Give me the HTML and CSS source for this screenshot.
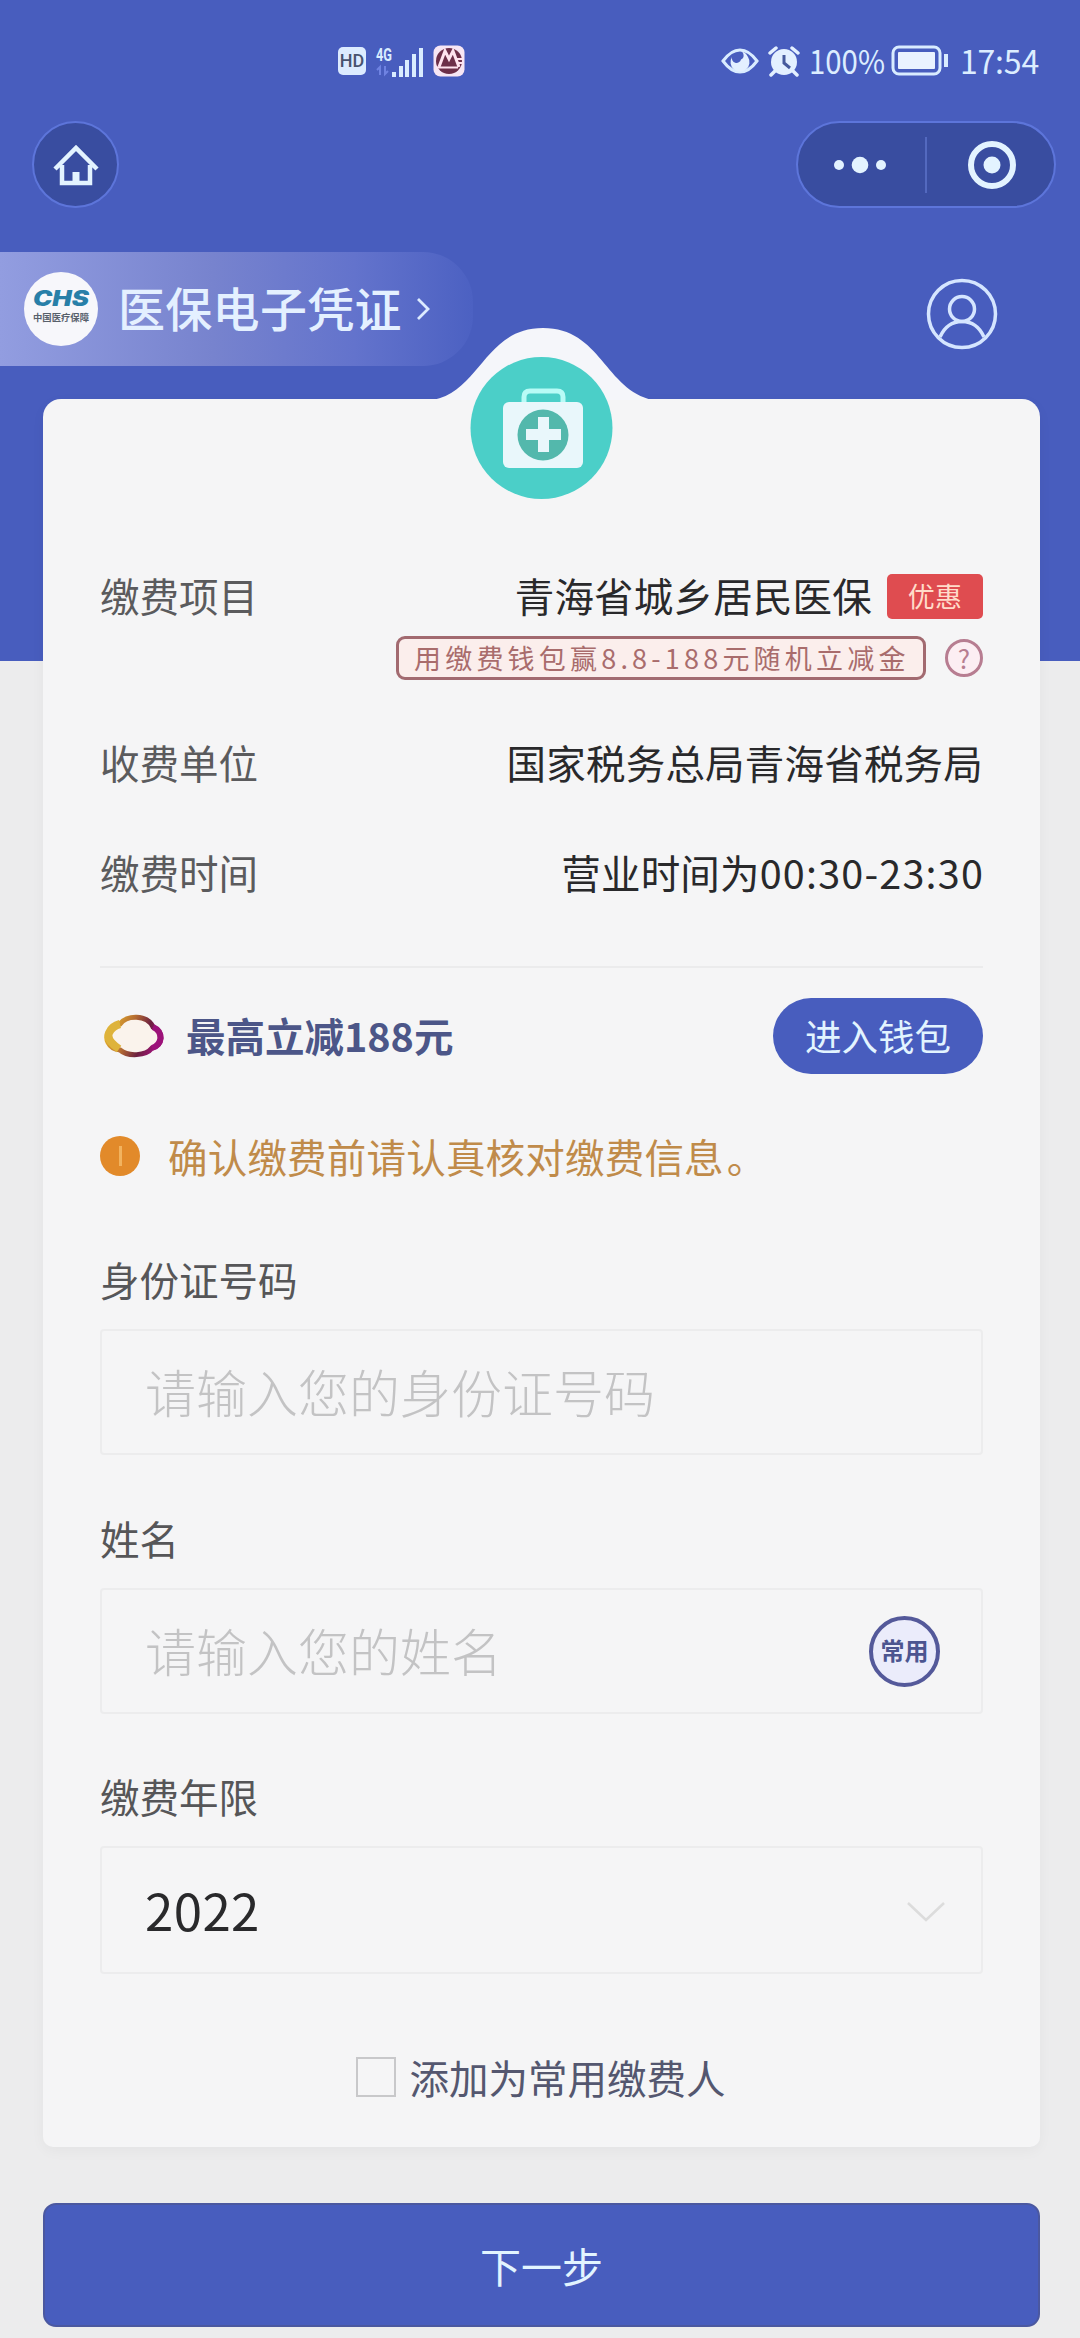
FILE: index.html
```
<!DOCTYPE html>
<html lang="zh-CN">
<head>
<meta charset="utf-8">
<title>医保缴费</title>
<link rel="stylesheet" href="styles.css">
</head>
<body>
<div class="page">
  <header class="status">
    <div class="status-left">
      <span class="hd">HD</span>
      <svg class="signal" width="50" height="34" viewBox="0 0 50 34">
        <text class="net" x="2" y="17" textLength="16" lengthAdjust="spacingAndGlyphs">4G</text>
        <path d="M6 31V23l-3 3M11 22v8l3-3" fill="none" stroke="#6f83e2" stroke-width="2"/>
        <path d="M18 28h4v5h-4zM25 22h4v11h-4zM31 16h4v17h-4zM38 10h4v23h-4zM45 4h4v29h-4z" fill="#d9ecff"/>
      </svg>
      <svg class="bank" width="32" height="32" viewBox="0 0 32 32">
        <rect x=".5" y=".5" width="31" height="31" rx="7" fill="#f7e6f4"/>
        <circle cx="16" cy="16" r="13" fill="#6d2f49"/>
        <path d="M6 22 12 6 16 14 20 6 26 22" fill="none" stroke="#ffe3ef" stroke-width="3"/>
        <path d="M4 22.500h21M23 14h7M24 18h6" stroke="#ffe3ef" stroke-width="2"/>
        <path d="M9 21 12 14 15 21zM17 21 20 14 23 21z" fill="#6d2f49"/>
      </svg>
    </div>
    <div class="status-right">
      <svg width="38" height="28" viewBox="0 0 38 28">
        <path d="M2 14Q10 3 19 3t17 11Q28 25 19 25T2 14z" fill="none" stroke="#d9ecff" stroke-width="3"/>
        <path d="M11 10a9.500 9.500 0 1 0 16 0A10 10 0 0 0 19 4a4.500 4.500 0 0 1 1 8.500A4.500 4.500 0 0 1 11 10z" fill="#e3f0ff"/>
      </svg>
      <svg width="32" height="32" viewBox="0 0 32 32">
        <circle cx="16" cy="17" r="13" fill="#e3f0ff"/>
        <path d="M2 8 8 3M30 8 24 3M7 26l-4 4M25 26l4 4" stroke="#e3f0ff" stroke-width="3.500" stroke-linecap="round"/>
        <path d="M16 10v8l6 5" fill="none" stroke="#465a9c" stroke-width="3"/>
      </svg>
      <svg class="percent" width="78" height="52" viewBox="0 0 78 52"><text x="1" y="39" textLength="76" lengthAdjust="spacingAndGlyphs">100%</text></svg>
      <svg class="battery" width="58" height="32" viewBox="0 0 58 32">
        <rect x="2" y="2" width="47" height="27" rx="6" fill="none" stroke="#d9ecff" stroke-width="3"/>
        <rect x="7" y="7" width="37" height="17" rx="1" fill="#eaf2ff"/>
        <path d="M53 9h4v13h-4z" fill="#d9ecff"/>
      </svg>
      <span class="clock">17:54</span>
    </div>
  </header>

  <nav class="nav">
    <a class="home">
      <svg width="46" height="42" viewBox="0 0 46 42">
        <path d="M2 25 23 4l21 21M9 21v18h28V21" fill="none" stroke="#e3f3ff" stroke-width="4.500"/>
        <path d="M19.500 28h7v11h-7z" fill="#e3f3ff"/>
      </svg>
    </a>
    <div class="capsule">
      <svg class="dots" width="52" height="18" viewBox="0 0 52 18">
        <circle cx="5" cy="9" r="5"/><circle cx="26" cy="9" r="8.300"/><circle cx="47" cy="9" r="5"/>
      </svg>
      <i class="bar"></i>
      <svg class="target" width="50" height="50" viewBox="0 0 50 50">
        <circle cx="25" cy="25" r="21" fill="none" stroke="#e3f3ff" stroke-width="6"/>
        <circle cx="25" cy="25" r="8.500" fill="#e3f3ff"/>
      </svg>
    </div>
  </nav>

  <section class="account">
    <a class="voucher">
      <svg width="76" height="76" viewBox="0 0 76 76">
        <circle cx="38" cy="38" r="37" fill="#f7f7fb"/>
        <text class="chs" x="10" y="35" textLength="56" lengthAdjust="spacingAndGlyphs">CHS</text>
        <text class="chs-sub" x="10" y="50" textLength="56" lengthAdjust="spacingAndGlyphs">中国医疗保障</text>
      </svg>
      <span class="voucher-name">医保电子凭证</span>
      <svg width="14" height="24" viewBox="0 0 14 24"><path d="M2 2 12 12 2 22" fill="none" stroke="#dcebff" stroke-width="2.800"/></svg>
    </a>
    <svg class="user" width="72" height="72" viewBox="0 0 72 72" fill="none" stroke="#d5e5ff" stroke-width="3.500">
      <circle cx="36" cy="36" r="33.500"/>
      <circle cx="36" cy="31" r="12.500"/>
      <path d="M14 59Q21 43.500 36 43.500T58 59"/>
    </svg>
  </section>

  <main class="card">
    <svg class="crest" width="220" height="175" viewBox="0 0 220 175">
      <path d="M0 73C48 63 52 1 110 1S172 63 220 73z" fill="#f5f6fa"/>
      <circle cx="108.500" cy="101" r="71" fill="#4bcfc8"/>
      <path d="M91 77v-7q0-6 6-6h27q6 0 6 6v7" fill="none" stroke="#b8fbf6" stroke-width="5"/>
      <rect x="70" y="75" width="80" height="66" rx="6" fill="#e9f7fb"/>
      <circle cx="110" cy="108" r="25.500" fill="#53b8ac"/>
      <path d="M105 90h11v12h12v11h-12v12h-11v-12H93v-11h12z" fill="#e9f7fb"/>
    </svg>

    <dl class="facts">
      <div class="fact">
        <dt>缴费项目</dt>
        <dd>青海省城乡居民医保<span class="tag">优惠</span></dd>
      </div>
      <div class="promo">
        <span class="coupon">用缴费钱包赢8.8-188元随机立减金</span>
        <span class="help">?</span>
      </div>
      <div class="fact unit"><dt>收费单位</dt><dd>国家税务总局青海省税务局</dd></div>
      <div class="fact time"><dt>缴费时间</dt><dd>营业时间为<span class="hours">00:30-23:30</span></dd></div>
    </dl>

    <div class="wallet">
      <svg width="62" height="44" viewBox="0 0 62 44">
        <defs><linearGradient id="ring" x1="0" x2="1" y1=".3" y2=".6">
          <stop offset="0" stop-color="#e8b52c"/><stop offset=".4" stop-color="#b46b32"/><stop offset=".7" stop-color="#6d2140"/><stop offset="1" stop-color="#a3117e"/>
        </linearGradient></defs>
        <path d="M16 10C22 1 43 0 49 13C61 18 59 32 48 34C42 42 24 43 16 36C4 35 0 24 5 17Q9 11 16 10z" fill="#faf3ec" stroke="url(#ring)" stroke-width="5"/>
        <path d="M16 10Q8 12 5 19T15 35" fill="none" stroke="#deb33b" stroke-width="8"/>
        <path d="M49 13C60 18 58 31 48 34" fill="none" stroke="#9c1279" stroke-width="6"/>
      </svg>
      <strong>最高立减188元</strong>
      <button class="enter">进入钱包</button>
    </div>

    <p class="notice"><i class="info"></i>确认缴费前请认真核对缴费信息<span class="stop">。</span></p>

    <form class="form">
      <label class="label">身份证号码</label>
      <div class="field id-field">请输入您的身份证号码</div>
      <label class="label">姓名</label>
      <div class="field name-field">请输入您的姓名<span class="common">常用</span></div>
      <label class="label">缴费年限</label>
      <div class="field year-field"><span>2022</span>
        <svg width="40" height="22" viewBox="0 0 40 22"><path d="M2 2 20 19 38 2" fill="none" stroke="#dcdcdc" stroke-width="2.500"/></svg>
      </div>
      <div class="remember"><i class="box"></i>添加为常用缴费人</div>
    </form>
  </main>

  <button class="next">下一步</button>
</div>
</body>
</html>
```
FILE: styles.css
```
* { box-sizing: border-box; }

body {
  margin: 0;
  font-family: "Noto Sans CJK SC", sans-serif;
  background: #ececed;
}

svg { display: block; flex: none; }

button {
  border: 0;
  padding: 0;
  font-family: inherit;
  color: #e2f4ff;
  background: #485dbe;
}

.page {
  height: 2338px;
  overflow: hidden;
  background: linear-gradient(#485dbe 661px, #ececed 661px);
}

/* status bar */
.status {
  display: flex;
  justify-content: space-between;
  height: 121px;
  padding: 0 41px 0 338px;
}
.status-left, .status-right { display: flex; align-items: center; height: 122px; }
.hd {
  width: 28px;
  height: 28px;
  border-radius: 5px;
  background: #dcebff;
  color: #48536f;
  font: 500 18px/28px Roboto, sans-serif;
  text-align: center;
}
.signal { margin-left: 8px; }
.net { font: 700 18px Roboto, sans-serif; fill: #d9ecff; }
.bank { margin-left: 9px; }
.status-right { color: #dcedff; font-size: 32px; line-height: 40px; }
.status-right svg + svg { margin-left: 9px; }
.status-right .percent { margin-left: 8px; }
.percent text { font-size: 33px; fill: #dcedff; }
.status-right .battery { margin-left: 5px; }
.clock { width: 79px; margin: -2px 0 0 11px; letter-spacing: -0.2px; }

/* navigation */
.nav {
  display: flex;
  justify-content: space-between;
  padding: 0 24px 0 32px;
  height: 131px;
}
.home, .capsule {
  height: 87px;
  border: 2px solid #5d75da;
  border-radius: 44px;
  background: #394da0;
  display: flex;
  align-items: center;
}
.home { width: 87px; justify-content: center; }
.capsule { width: 260px; }
.dots { margin-left: 36px; fill: #e3f3ff; }
.bar { width: 2px; height: 56px; margin: 0 40px 0 39px; background: #5369bf; }

/* account strip */
.account { display: flex; justify-content: space-between; height: 147px; padding-right: 82px; }
.voucher {
  display: flex;
  align-items: center;
  width: 473px;
  height: 114px;
  padding-left: 23px;
  border-radius: 0 50px 50px 0;
  background: linear-gradient(90deg, #929de0, #7783ce 45%, #6373cc 75%, #4c61c2);
}
.chs { font: italic 900 21px Inter, sans-serif; fill: #287fa8; }
.chs-sub { font-size: 9px; font-weight: 700; fill: #58606b; }
.voucher-name {
  width: 282px;
  margin: 0 16px 6px 19px;
  font-size: 47px;
  font-weight: 500;
  letter-spacing: .3px;
  color: #e4f0ff;
  white-space: nowrap;
}
.user { margin-top: 26px; }

/* card */
.card {
  position: relative;
  width: 997px;
  height: 1748px;
  margin-left: 43px;
  padding: 166px 57px 0;
  border-radius: 18px 18px 10px 10px;
  background: #f5f5f6;
  box-shadow: 0 4px 14px rgba(0, 0, 0, .04);
}
.crest { position: absolute; left: 390px; top: -72px; }

.facts { margin: 0; font-size: 39.5px; line-height: 60px; }
.fact { display: flex; justify-content: space-between; height: 60px; }
.fact dt { color: #5b5b5d; }
.fact dd { display: flex; align-items: center; margin: 0; letter-spacing: .2px; color: #29292b; white-space: nowrap; }
.hours { letter-spacing: 1.2px; margin-right: -1px; }
.tag {
  width: 96px;
  height: 45px;
  margin: 2px 0 0 15px;
  border-radius: 5px;
  background: #df4c50;
  color: #ffdcca;
  font-size: 27px;
  line-height: 43px;
  text-align: center;
}
.promo { display: flex; justify-content: flex-end; align-items: center; height: 66px; }
.coupon {
  width: 530px;
  height: 44px;
  border: 3px solid #a26a70;
  border-radius: 9px;
  padding-left: 15px;
  background: #fbeeec;
  color: #a96c6c;
  font-size: 27px;
  line-height: 37px;
  letter-spacing: 4.2px;
  white-space: nowrap;
}
.help {
  width: 38px;
  height: 38px;
  margin-left: 19px;
  border: 3px solid #b77d91;
  border-radius: 50%;
  background: #fceef3;
  color: #b77d91;
  font-size: 26px;
  line-height: 31px;
  text-align: center;
}
.unit { margin-top: 41px; }
.time { margin-top: 50px; }

.wallet {
  display: flex;
  align-items: center;
  height: 137px;
  margin-top: 64px;
  padding-left: 4px;
  border-top: 2px solid #ebebec;
}
.wallet strong { margin: -2px auto 0 20px; font-size: 39.5px; line-height: 60px; color: #4c5688; }
.enter { width: 210px; height: 76px; border-radius: 38px; font-size: 36.500px; line-height: 72px; }

.notice {
  display: flex;
  align-items: center;
  margin: 23px 0 0;
  font-size: 39.500px;
  line-height: 60px;
  letter-spacing: .2px;
  color: #c08b4a;
}
.stop { margin-left: 3px; }
.info {
  display: flex;
  justify-content: center;
  align-items: center;
  width: 40px;
  height: 40px;
  margin-right: 28px;
  border-radius: 50%;
  background: #e28a2a;
}
.info::before { content: ""; width: 3px; height: 20px; background: #f2b35e; }

/* form */
.form { padding-top: 63px; }
.label { display: block; font-size: 39.500px; line-height: 60px; color: #565658; }
.field {
  display: flex;
  justify-content: space-between;
  align-items: center;
  height: 126px;
  border: 2px solid #ececed;
  border-radius: 4px;
  padding: 0 36px 2px 43px;
  font-size: 51px;
  font-weight: 300;
  color: #c3c3c4;
}
.id-field { margin: 20px 0 53px; }
.name-field { margin: 20px 0 52px; }
.year-field { height: 128px; margin-top: 20px; color: #29292b; font-weight: 400; }
.year-field span { letter-spacing: .4px; }
.year-field svg { margin: 6px -1px 0 0; }
.common {
  width: 71px;
  height: 71px;
  margin: 2px 5px 0 0;
  border: 4px solid #54599a;
  border-radius: 50%;
  background: #ebecfb;
  color: #4c5590;
  font-size: 24px;
  font-weight: 700;
  line-height: 60px;
  text-align: center;
}
.remember {
  display: flex;
  justify-content: center;
  align-items: center;
  margin: 73px 2px 0 0;
  font-size: 39.500px;
  line-height: 60px;
  color: #54576f;
}
.box { width: 40px; height: 40px; margin-right: 14px; border: 2px solid #c8c8ca; }

.next {
  display: block;
  width: 997px;
  height: 124px;
  margin: 56px 0 0 43px;
  border-radius: 13px;
  border: 2px solid #4b58a0;
  font-size: 41px;
  line-height: 114px;
}
```
